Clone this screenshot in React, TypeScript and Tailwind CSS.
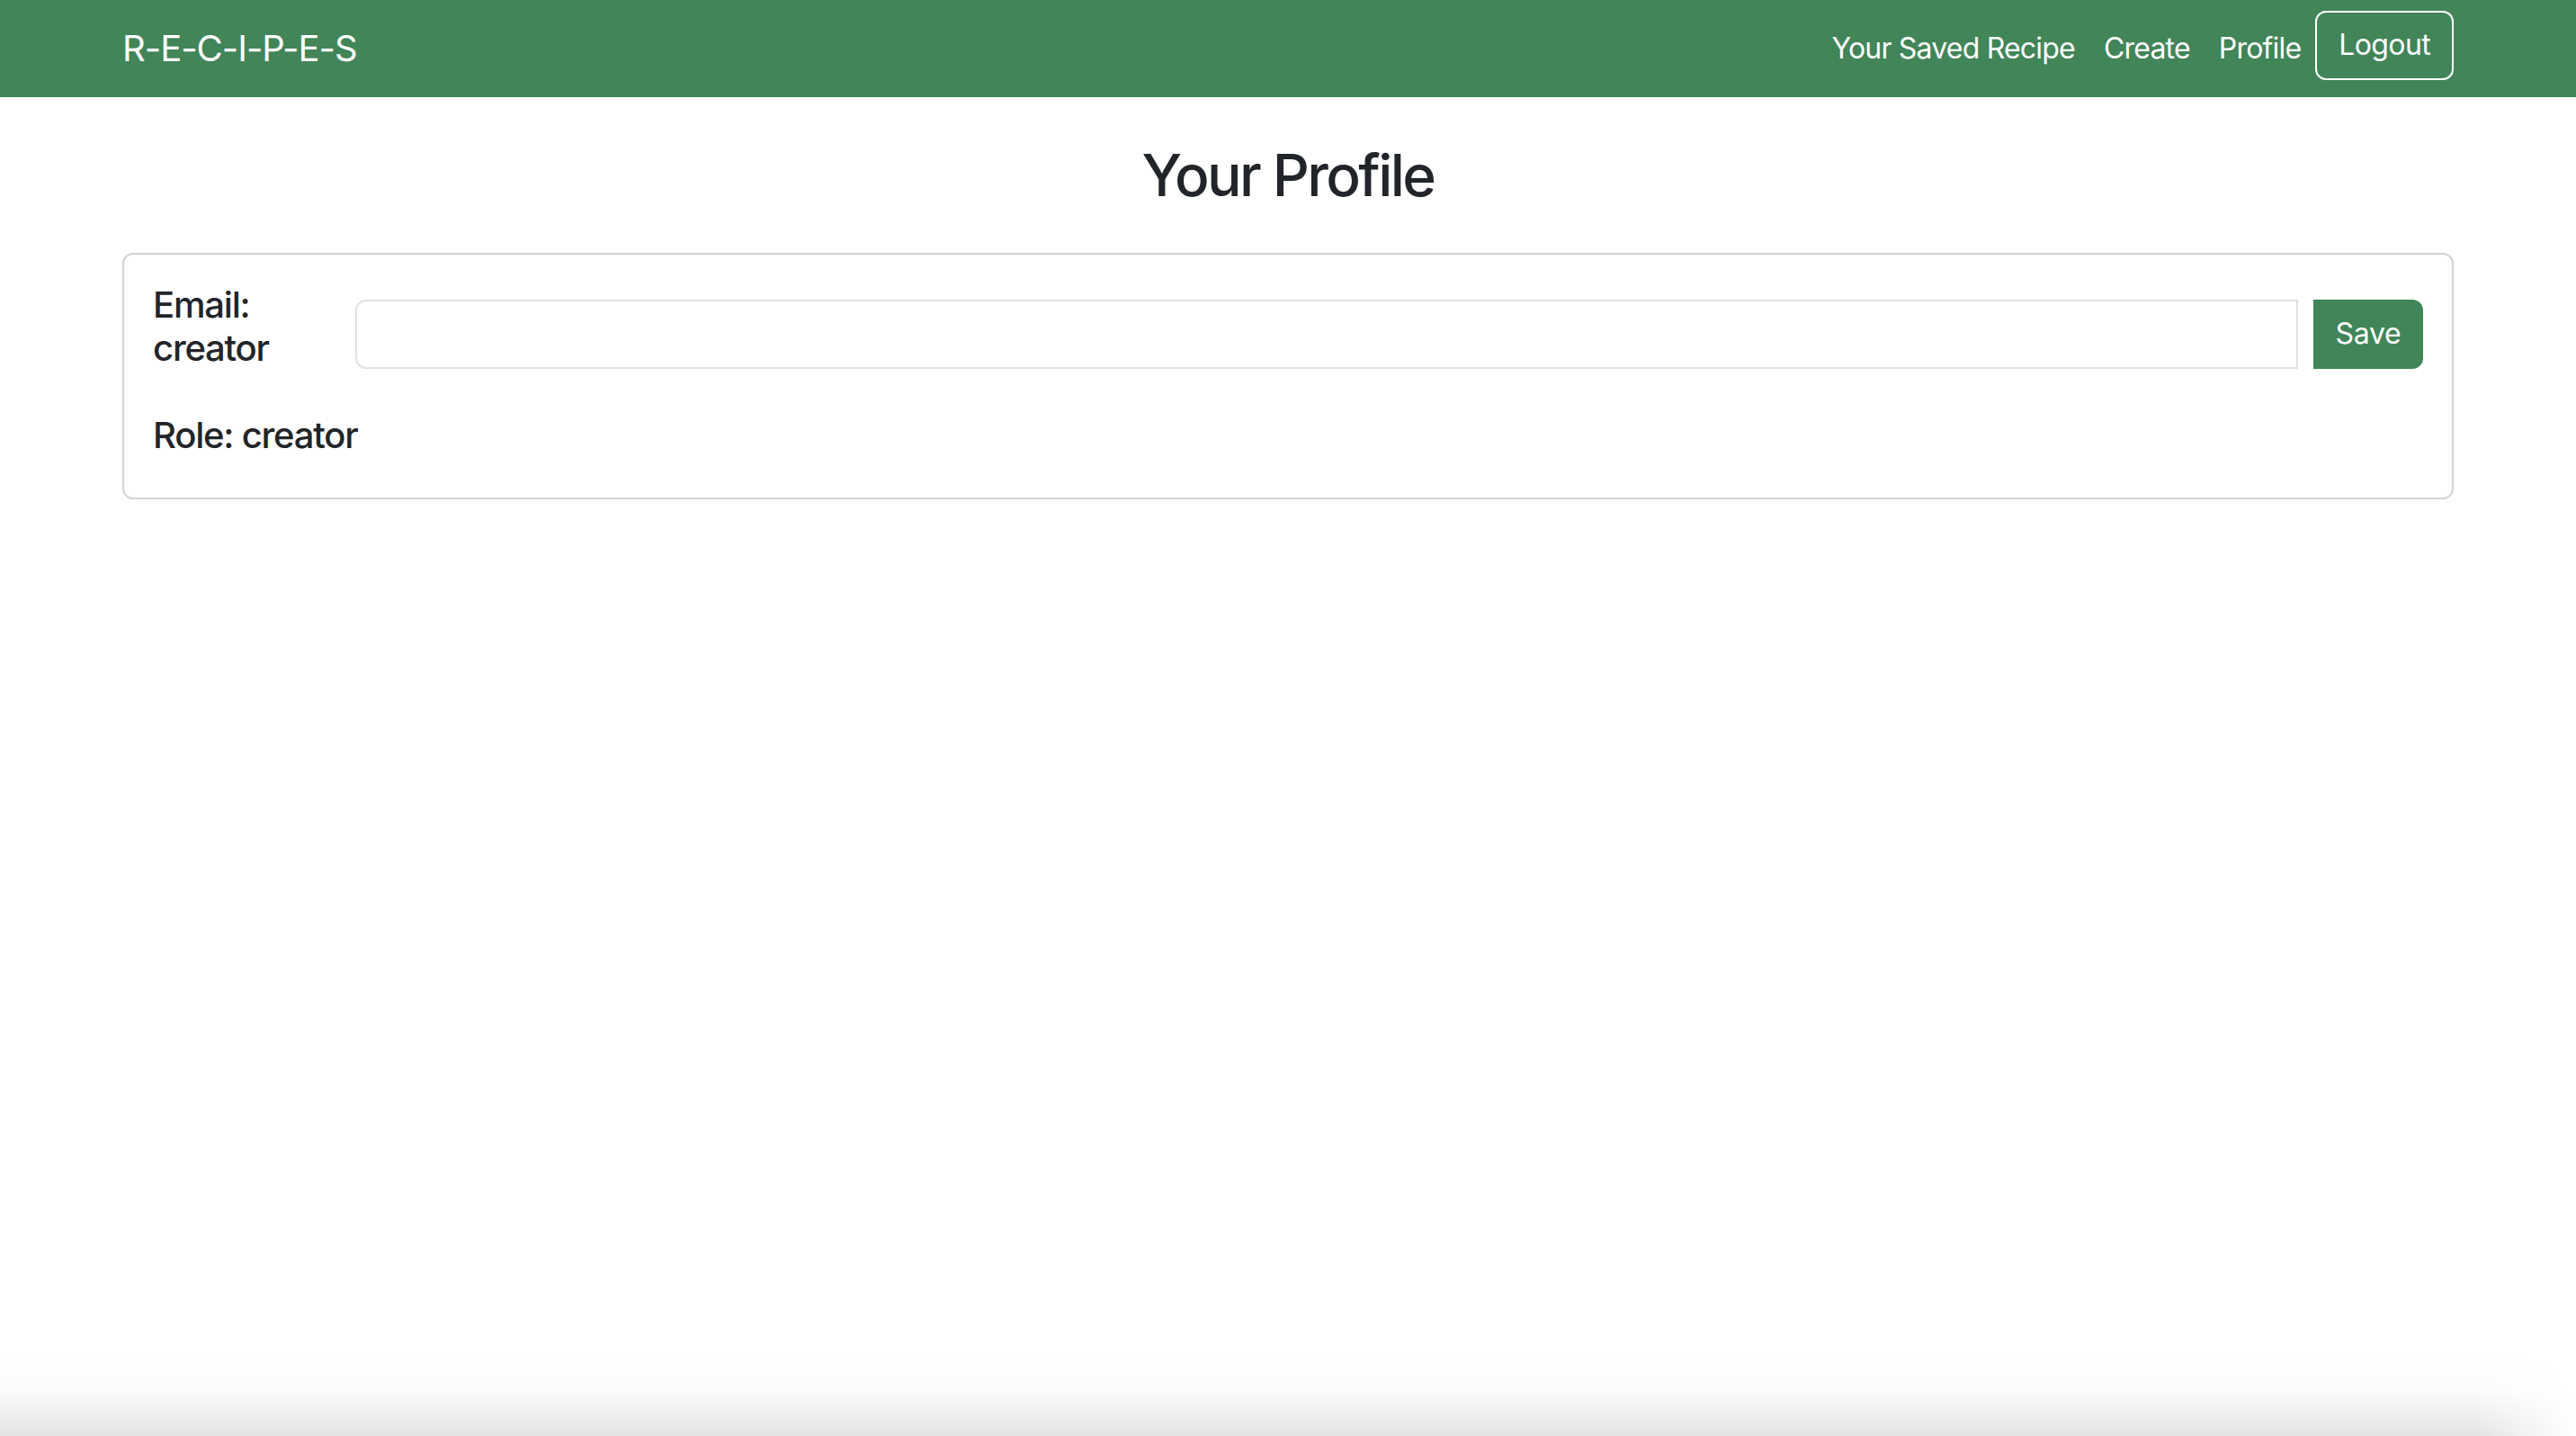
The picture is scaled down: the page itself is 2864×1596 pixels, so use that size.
import React from 'react';

const green = 'bg-[#418558]';

const Navbar: React.FC = () => {
  return (
    <nav className={`${green} h-[108px] shrink-0`}>
      <div className="mx-auto flex h-full w-[2592px] items-center justify-between">
        <a className="text-[40px] leading-[48px] tracking-[-0.025em] text-white">R-E-C-I-P-E-S</a>
        <div className="flex items-center">
          <a className="px-[16px] text-[32px] leading-[48px] tracking-[-0.025em] text-white">Your Saved Recipe</a>
          <a className="px-[16px] text-[32px] leading-[48px] tracking-[-0.025em] text-white">Create</a>
          <a className="px-[16px] text-[32px] leading-[48px] tracking-[-0.025em] text-white">Profile</a>
          <button className="-mt-[8px] h-[77px] rounded-[12px] border-2 border-white px-[24px] text-[32px] leading-[48px] tracking-[-0.02em] text-white">
            Logout
          </button>
        </div>
      </div>
    </nav>
  );
};

const App: React.FC = () => {
  return (
    <div className="flex h-screen flex-col bg-white font-['Inter','Liberation_Sans',sans-serif] text-[#212529]">
      <Navbar />

      <main className="mx-auto w-[2592px]">
        <h2 className="mt-[48px] mb-[48px] text-center text-[64px] font-medium leading-[77px] tracking-[-0.04em]">Your Profile</h2>

        <div className="rounded-[12px] border-2 border-[#d3d3d3] p-[32px]">
          <div className="mb-[33px] flex items-center">
            <h5 className="mb-[16px] w-[225px] shrink-0 pr-[40px] text-[40px] font-medium leading-[48px] tracking-[-0.03em]">Email: creator</h5>
            <input className="h-[77px] flex-1 rounded-l-[12px] border-2 border-[#dee2e6] px-[24px] text-[32px] outline-none" />
            <button className={`${green} ml-[17px] h-[77px] w-[122px] rounded-r-[12px] text-[32px] tracking-[-0.01em] text-white`}>Save</button>
          </div>
          <h5 className="mb-[13px] text-[40px] font-medium leading-[48px] tracking-[-0.03em]">Role: creator</h5>
        </div>
      </main>

      <div className="mt-auto h-[90px] w-full bg-[linear-gradient(to_bottom,#ffffff,#fbfbfb_45%,#e3e3e3)] [mask-image:linear-gradient(to_right,black_96%,transparent)]" />
    </div>
  );
};

export default App;
